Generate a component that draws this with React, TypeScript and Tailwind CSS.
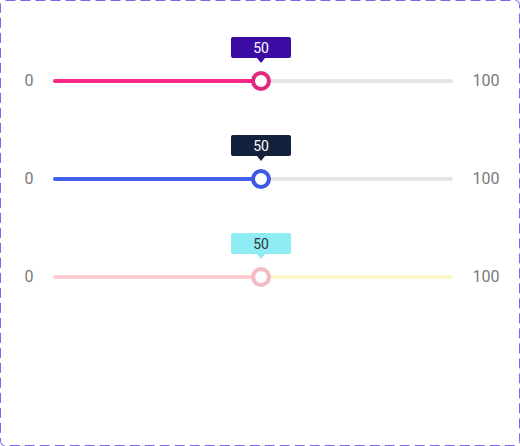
const sliders = [
  {
    fill: "bg-[#f72585]",
    rest: "bg-[#e6e6e6]",
    thumb: "border-[#e3287f]",
    tip: "bg-[#3a0ca3] text-white",
    arrow: "border-t-[#3a0ca3]",
  },
  {
    fill: "bg-[#4361ee]",
    rest: "bg-[#e6e6e6]",
    thumb: "border-[#3f59e4]",
    tip: "bg-[#14213d] text-white",
    arrow: "border-t-[#14213d]",
  },
  {
    fill: "bg-[#ffcdd2]",
    rest: "bg-[#fcf7c8]",
    thumb: "border-[#f3bcc1]",
    tip: "bg-[#8eecf4] text-[#333333]",
    arrow: "border-t-[#8eecf4]",
  },
];

function Slider({ s }: { s: (typeof sliders)[number] }) {
  return (
    <div className="flex items-center h-[20px]">
      <div className="w-[24px] ml-[17px] text-center text-[16px] text-[#7a7a7a]">0</div>
      <div className="relative ml-[12px] w-[400px] h-[20px] flex items-center">
        <div className={`w-full h-[4px] rounded-full ${s.rest}`} />
        <div className={`absolute left-0 top-[8px] w-[208px] h-[4px] rounded-full ${s.fill}`} />
        {/* thumb */}
        <div
          className={`absolute left-[198px] top-0 w-[20px] h-[20px] rounded-full bg-white border-[4px] ${s.thumb}`}
        />
        {/* tooltip */}
        <div className="absolute left-[178px] top-[-34px] flex flex-col items-center">
          <div
            className={`w-[60px] h-[21px] rounded-[2px] flex items-center justify-center text-[14px] leading-none ${s.tip}`}
          >
            50
          </div>
          <div
            className={`w-0 h-0 border-l-[4px] border-r-[4px] border-t-[5px] border-l-transparent border-r-transparent ${s.arrow}`}
          />
        </div>
      </div>
      <div className="w-[40px] ml-[13px] text-center text-[16px] text-[#7a7a7a]">100</div>
    </div>
  );
}

export default function App() {
  return (
    <div
      className="relative w-[520px] h-[446px] bg-white"
      style={{ fontFamily: "Roboto, 'Liberation Sans', sans-serif" }}
    >
      <svg className="absolute inset-0 pointer-events-none" width="520" height="446">
        <rect
          x="0.5"
          y="0.5"
          width="519"
          height="445"
          rx="4"
          fill="none"
          stroke="#7d66f3"
          strokeWidth="1"
          strokeDasharray="10 5"
          strokeDashoffset="-1"
        />
      </svg>
      <div className="pt-[71px] flex flex-col gap-[78px]">
        {sliders.map((s, i) => (
          <Slider key={i} s={s} />
        ))}
      </div>
    </div>
  );
}
